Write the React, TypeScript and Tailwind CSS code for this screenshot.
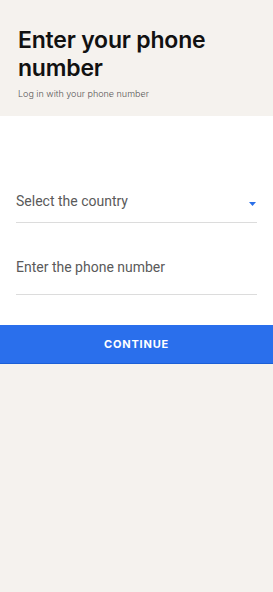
export default function App() {
  return (
    <div className="min-h-[592px] w-full bg-[#f5f2ee] font-['Inter',sans-serif]">
      {/* header */}
      <div className="px-[18px] pt-[26px] pb-[16px]">
        <h1 className="text-[23px] leading-[28px] font-semibold text-[#111] tracking-[-0.2px]">
          Enter your phone number
        </h1>
        <p className="mt-[6px] text-[9px] leading-[12px] font-light text-[#555]">
          Log in with your phone number
        </p>
      </div>

      {/* form */}
      <div className="bg-white px-4 pt-[75px] pb-[30px] font-['Roboto',sans-serif]">
        <div className="flex items-center justify-between border-b border-[#dcdcdc] pb-[11px]">
          <span className="text-[14px] leading-[20px] text-[#5a5a5a]">Select the country</span>
          <svg width="7" height="4" viewBox="0 0 7 4" className="mr-[1px] mt-[6px]">
            <path d="M0 0h7L3.5 4z" fill="#2a6fe8" />
          </svg>
        </div>
        <div className="mt-[32px] border-b border-[#dcdcdc] pb-[15px]">
          <span className="text-[14px] leading-[20px] text-[#5a5a5a]">Enter the phone number</span>
        </div>
      </div>

      <button className="flex h-[39px] w-full items-center justify-center border-b border-[#1b5fd6] bg-[#2a6fec] text-[11px] font-bold tracking-[0.8px] text-white">
        CONTINUE
      </button>
    </div>
  );
}
